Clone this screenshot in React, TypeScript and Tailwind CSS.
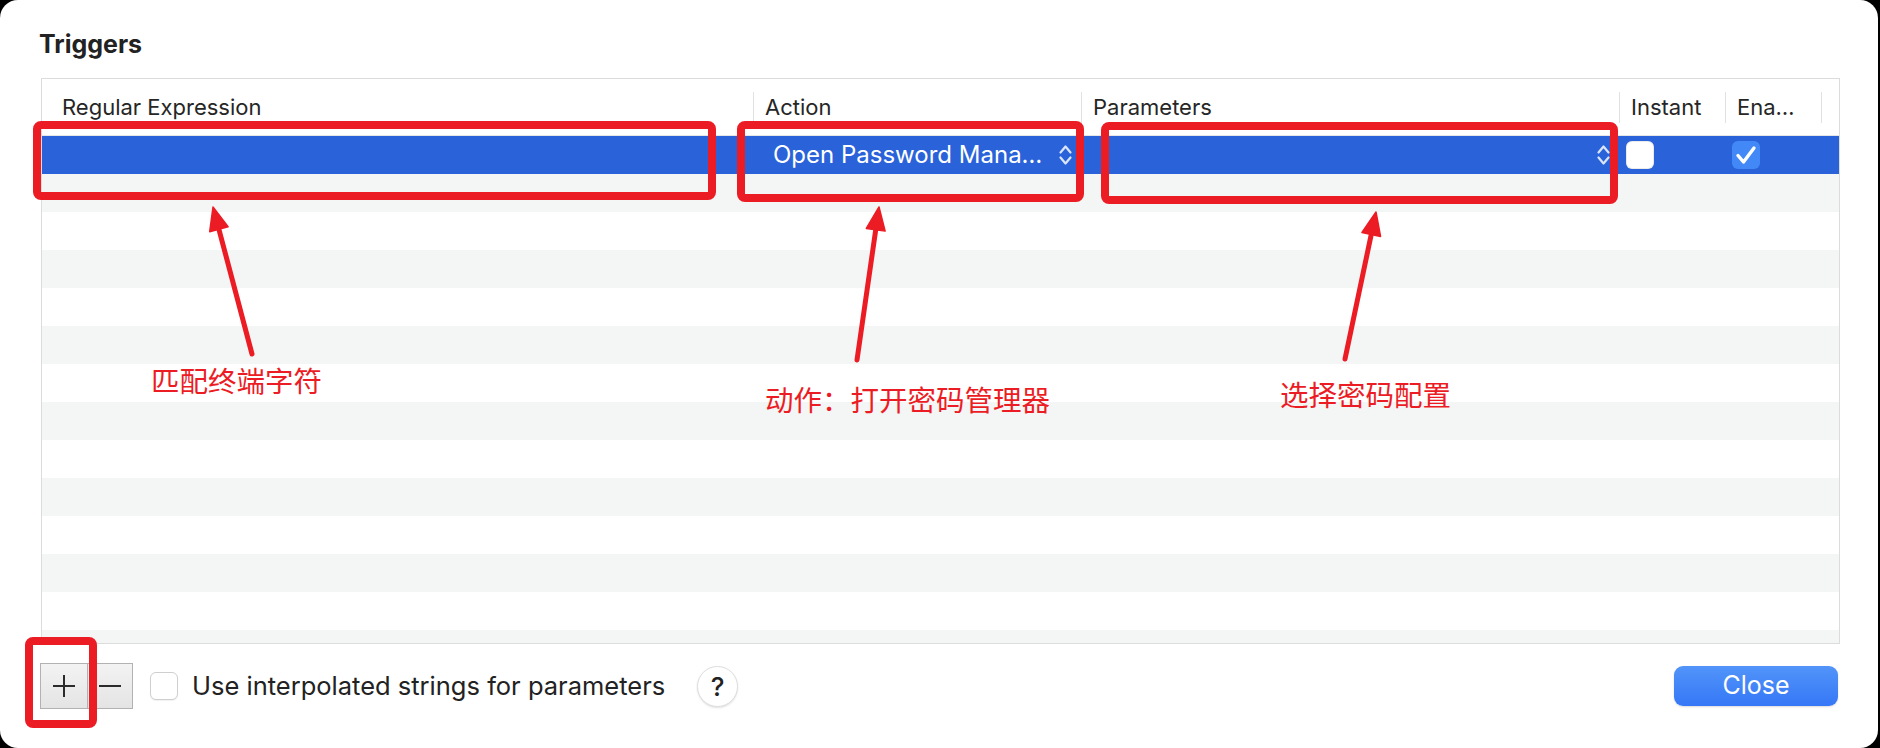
import React from "react";

const ROWS = Array.from({ length: 14 }, (_, i) => i);

const Chevrons = ({ className = "" }: { className?: string }) => (
  <svg width="15" height="24" viewBox="0 0 15 24" className={className} fill="none">
    <path d="M2.5 9.5 L7.5 3.5 L12.5 9.5" stroke="currentColor" strokeWidth="2.2" strokeLinecap="round" strokeLinejoin="round" />
    <path d="M2.5 14.5 L7.5 20.5 L12.5 14.5" stroke="currentColor" strokeWidth="2.2" strokeLinecap="round" strokeLinejoin="round" />
  </svg>
);

const Arrow = ({ x1, y1, x2, y2 }: { x1: number; y1: number; x2: number; y2: number }) => {
  const dx = x2 - x1;
  const dy = y2 - y1;
  const len = Math.hypot(dx, dy);
  const ux = dx / len;
  const uy = dy / len;
  const L = 23;
  const W = 9.5;
  const bx = x2 - ux * L;
  const by = y2 - uy * L;
  const pts = `${x2},${y2} ${bx - uy * W},${by + ux * W} ${bx + uy * W},${by - ux * W}`;
  return (
    <g>
      <line x1={x1} y1={y1} x2={bx + ux * 3} y2={by + uy * 3} stroke="#ec1c24" strokeWidth="5" strokeLinecap="round" />
      <polygon points={pts} fill="#ec1c24" stroke="#ec1c24" strokeWidth="1.5" strokeLinejoin="round" />
    </g>
  );
};

const HeaderCell = ({ width, label, first = false }: { width: string; label: string; first?: boolean }) => (
  <div className={`${width} h-full flex items-center shrink-0`}>
    {!first && <span className="h-[31px] w-px bg-[#e1e1e1]" />}
    <span className={first ? "pl-[20px]" : "pl-[11px]"}>{label}</span>
  </div>
);

export default function App() {
  return (
    <div className="w-[1880px] h-[748px] bg-black overflow-hidden font-['Inter',sans-serif]">
      <div className="relative w-[1878px] h-[748px] rounded-[18px] bg-white pl-[41px] pr-[40px] pt-[30px] flex flex-col">
        <h1 className="h-[28px] leading-[28px] text-[25px] font-bold text-[#222] -ml-[2px]">Triggers</h1>

        {/* table */}
        <div className="mt-[20px] w-[1799px] h-[566px] border border-[#dcdcdc] overflow-hidden flex flex-col">
          <div className="h-[57px] shrink-0 border-b border-[#e6e6e6] flex text-[22px] text-[#262626]">
            <HeaderCell width="w-[711px]" label="Regular Expression" first />
            <HeaderCell width="w-[328px]" label="Action" />
            <HeaderCell width="w-[538px]" label="Parameters" />
            <HeaderCell width="w-[106px]" label="Instant" />
            <HeaderCell width="w-[96px]" label="Ena…" />
            <div className="h-full flex items-center">
              <span className="h-[31px] w-px bg-[#e1e1e1]" />
            </div>
          </div>

          {ROWS.map((i) =>
            i === 0 ? (
              <div key={i} className="h-[38px] shrink-0 bg-[#2962d9] flex items-center text-white">
                <div className="w-[711px] shrink-0" />
                <div className="w-[328px] shrink-0 flex items-center justify-between pl-[20px] pr-[8px]">
                  <span className="text-[24px] leading-none">Open Password Mana…</span>
                  <Chevrons className="text-[#dbe5fa]" />
                </div>
                <div className="w-[538px] shrink-0 flex items-center justify-end pr-[8px]">
                  <Chevrons className="text-[#dbe5fa]" />
                </div>
                <div className="w-[106px] shrink-0 pl-[7px] flex items-center">
                  <span className="w-[28px] h-[28px] rounded-[6px] bg-white shadow-[inset_0_0_0_1px_rgba(0,0,0,0.08)]" />
                </div>
                <div className="w-[96px] shrink-0 pl-[7px] flex items-center">
                  <span className="w-[28px] h-[28px] rounded-[6px] bg-[#4289f7] flex items-center justify-center">
                    <svg width="24" height="24" viewBox="0 0 24 24" fill="none">
                      <path d="M4 12.5 L9.5 19 L20 5" stroke="white" strokeWidth="3.4" strokeLinecap="round" strokeLinejoin="round" />
                    </svg>
                  </span>
                </div>
              </div>
            ) : (
              <div key={i} className={`h-[38px] shrink-0 ${i % 2 === 1 ? "bg-[#f4f5f5]" : "bg-white"}`} />
            )
          )}
        </div>

        {/* bottom bar */}
        <div className="mt-[19px] h-[46px] flex items-center">
          <div className="-ml-px w-[93px] h-[46px] flex border border-[#b2b2b2] bg-gradient-to-b from-[#f3f3f3] to-[#e4e4e4]">
            <div className="w-[47px] h-full flex items-center justify-center border-r border-[#b2b2b2]">
              <svg width="24" height="24" viewBox="0 0 24 24">
                <path d="M12 1 V23 M1 12 H23" stroke="#2b2b2b" strokeWidth="2" />
              </svg>
            </div>
            <div className="flex-1 h-full flex items-center justify-center">
              <svg width="22" height="4" viewBox="0 0 22 4">
                <path d="M0 2 H22" stroke="#2b2b2b" strokeWidth="2" />
              </svg>
            </div>
          </div>
          <span className="ml-[17px] w-[28px] h-[28px] rounded-[6px] bg-white border border-[#cfcfcf] shadow-[0_1px_1px_rgba(0,0,0,0.06)]" />
          <span className="ml-[14px] w-[505px] text-[25.5px] text-[#222] leading-none">Use interpolated strings for parameters</span>
          <span className="w-[41px] h-[41px] rounded-full bg-white border border-[#dedede] shadow-[0_1px_2px_rgba(0,0,0,0.12)] flex items-center justify-center text-[26px] font-medium text-[#222]">
            ?
          </span>
          <button className="ml-auto w-[164px] h-[40px] rounded-[9px] bg-gradient-to-b from-[#5294f9] to-[#3577f6] text-white text-[25px] shadow-[0_1px_2px_rgba(0,0,0,0.15)]">
            Close
          </button>
        </div>

        {/* annotations */}
        <svg className="absolute inset-0 pointer-events-none" width="1878" height="748" viewBox="0 0 1878 748">
          <g fill="none" stroke="#ec1c24" strokeWidth="8">
            <rect x="37" y="125" width="675" height="71" rx="4" />
            <rect x="741" y="125" width="339" height="73" rx="4" />
            <rect x="1105" y="126" width="509" height="74" rx="4" />
            <rect x="29" y="641" width="64" height="83" rx="4" />
          </g>
          <Arrow x1={252} y1={354} x2={213} y2={207} />
          <Arrow x1={857} y1={360} x2={879} y2={207} />
          <Arrow x1={1345} y1={359} x2={1376} y2={212} />
        </svg>
        <span className="absolute left-[151px] top-[366px] text-[28.5px] leading-none text-[#ec1c24] font-['Noto_Sans_CJK_SC',sans-serif]">匹配终端字符</span>
        <span className="absolute left-[765px] top-[385px] text-[28.5px] leading-none text-[#ec1c24] font-['Noto_Sans_CJK_SC',sans-serif]">动作：打开密码管理器</span>
        <span className="absolute left-[1280px] top-[380px] text-[28.5px] leading-none text-[#ec1c24] font-['Noto_Sans_CJK_SC',sans-serif]">选择密码配置</span>
      </div>
    </div>
  );
}
